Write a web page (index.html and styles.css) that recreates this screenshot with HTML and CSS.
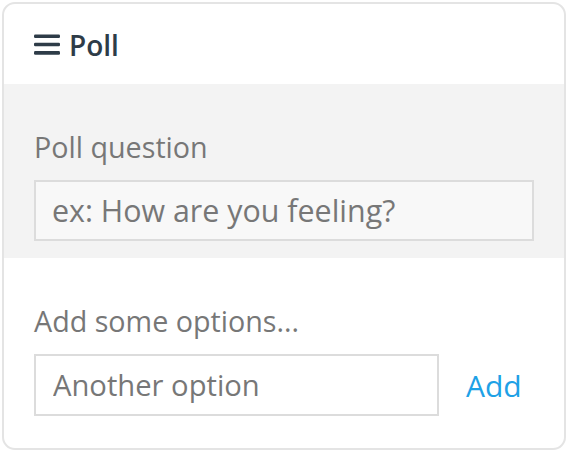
FILE: index.html
```
<!DOCTYPE html>
<html>
<head>
<meta charset="utf-8">
<link rel="stylesheet" href="styles.css">
</head>
<body>
<div class="card">
  <div class="card-header">
    <svg class="menu-icon" width="26" height="21" viewBox="0 0 26 21"><rect x="0" y="0.4" width="26" height="3.6" rx="1.3"/><rect x="0" y="8.7" width="26" height="3.6" rx="1.3"/><rect x="0" y="17.1" width="26" height="3.6" rx="1.3"/></svg>
    <span class="title">Poll</span>
  </div>
  <div class="section section-grey">
    <label class="label">Poll question</label>
    <input class="field field-grey" type="text" placeholder="ex: How are you feeling?">
  </div>
  <div class="section section-options">
    <label class="label">Add some options...</label>
    <div class="option-row">
      <input class="field field-option" type="text" placeholder="Another option">
      <button class="add-btn">Add</button>
    </div>
  </div>
</div>
</body>
</html>
```
FILE: styles.css
```
* { box-sizing: border-box; }
body {
  margin: 0;
  padding: 2px;
  background: #fff;
  font-family: "Open Sans", "Noto Sans", sans-serif;
}
.card {
  width: 564px;
  border: 2px solid #e4e4e4;
  border-radius: 13px;
  overflow: hidden;
  background: #fff;
}
.card-header {
  height: 80px;
  display: flex;
  align-items: center;
  gap: 9px;
  padding: 0 30px;
  color: #2e3c48;
}
.menu-icon { fill: #2e3c48; margin-top: 1px; }
.title {
  font-size: 28px;
  font-weight: 600;
  line-height: 38px;
  margin-top: 2px;
}
.section {
  display: flex;
  flex-direction: column;
  padding: 44px 30px 30px;
}
.section-grey {
  background: #f3f3f3;
  padding-bottom: 17px;
}
.section-options { padding-bottom: 32px; }
.label {
  font-size: 28.7px;
  line-height: 38px;
  color: #777;
  margin-bottom: 14px;
}
.field {
  height: 61px;
  border: 2px solid #dcdcdc;
  background: #fff;
  padding: 0 16px;
  font-family: inherit;
  font-size: 30.4px;
  color: #444;
  outline: none;
}
.field::placeholder { color: #777; }
.field-grey { background: #f8f8f8; }
.option-row {
  display: flex;
  align-items: center;
}
.field-option {
  flex: 0 0 405px;
  width: 405px;
  height: 62px;
  font-size: 29.2px;
  padding-left: 17px;
}
.add-btn {
  border: none;
  background: none;
  font-family: inherit;
  font-size: 30px;
  color: #1ea1e6;
  padding: 0 0 0 27px;
  margin: 0;
  cursor: pointer;
}
```
